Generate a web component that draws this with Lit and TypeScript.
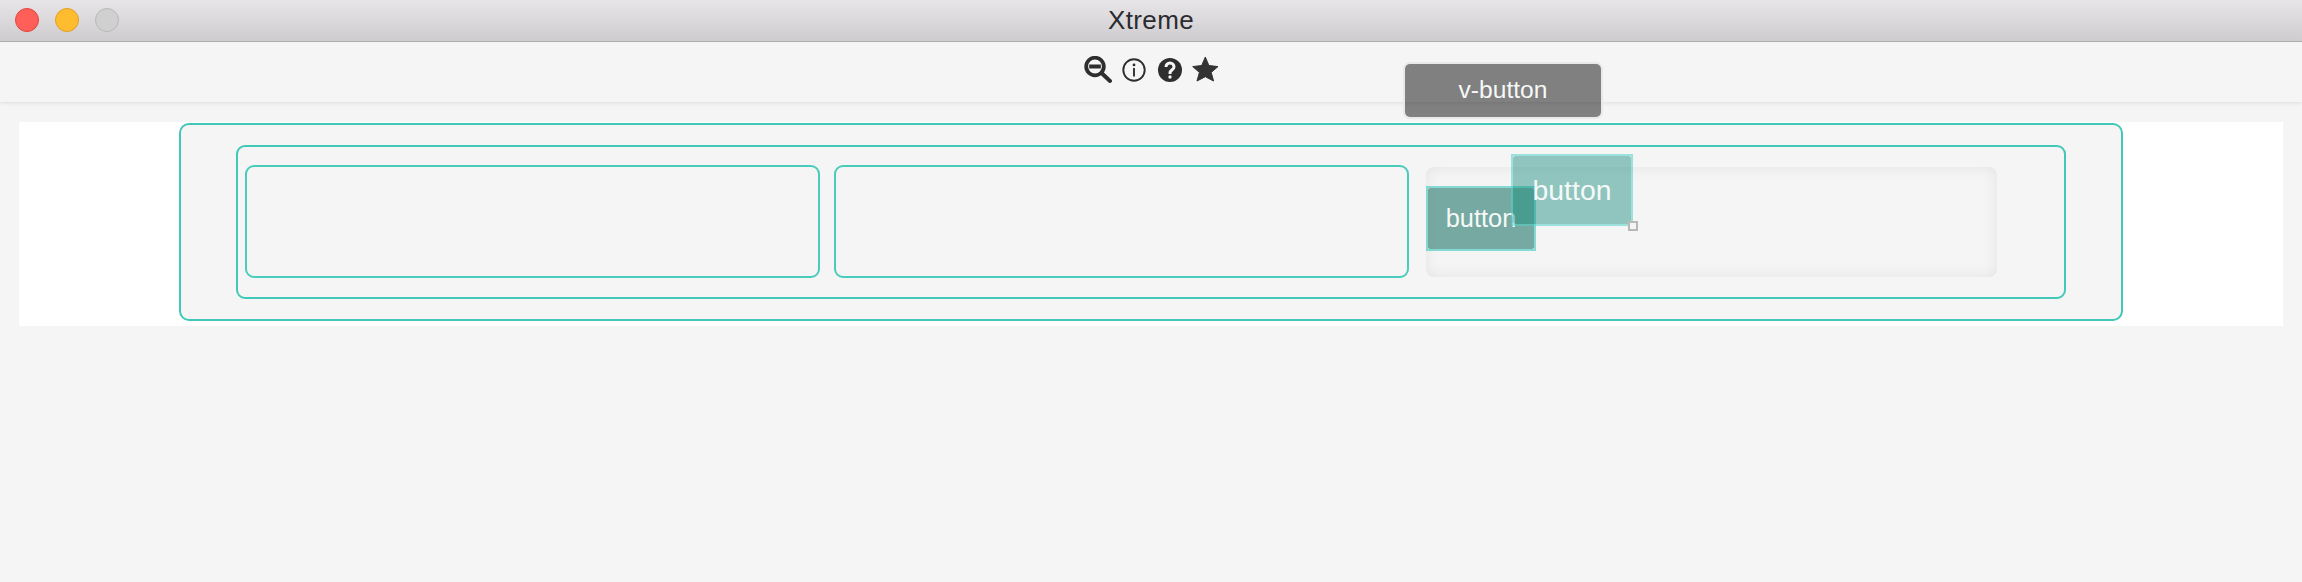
import { LitElement, html, css } from "lit";
import { customElement } from "lit/decorators.js";

@customElement("app-root")
export class AppRoot extends LitElement {
  static styles = css`
    :host {
      display: block;
      height: 582px;
      background: #f5f5f5;
      font-family: "Liberation Sans", Arial, sans-serif;
      overflow: hidden;
    }
    .stage {
      position: relative;
      width: 2302px;
      height: 582px;
    }
    .titlebar {
      height: 41px;
      box-sizing: content-box;
      border-bottom: 1px solid #aeacb0;
      background: linear-gradient(#e7e5e8, #cecccf);
      display: flex;
      align-items: center;
      position: relative;
      justify-content: center;
    }
    .lights {
      position: absolute;
      left: 15px;
      top: 8px;
      display: flex;
      gap: 16px;
    }
    .light {
      width: 24px;
      height: 24px;
      border-radius: 50%;
      box-sizing: border-box;
      border: 1px solid;
    }
    .red { background: #fe5f58; border-color: #e5443e; }
    .yellow { background: #febc2e; border-color: #e1a024; }
    .gray { background: #d0d0d0; border-color: #b8b8b8; }
    .title {
      font-size: 26px;
      color: #2b2b2f;
      letter-spacing: 0.4px;
    }
    .toolbar {
      height: 60px;
      background: #f5f5f5;
      box-shadow: 0 1px 4px rgba(0, 0, 0, 0.1);
      display: flex;
      justify-content: center;
      align-items: flex-start;
      gap: 10px;
      padding-top: 14px;
      box-sizing: border-box;
    }
    .toolbar svg { display: block; color: #2e2e2e; }
    .info { margin-top: 2px; }
    .help { margin: 2px 2px 0; }
    .star { margin-left: -2px; }
    .panel {
      margin: 20px 19px 0;
      height: 204px;
      background: #fff;
      padding: 1px 0 0 160px;
      box-sizing: border-box;
    }
    .outer {
      width: 1944px;
      height: 198px;
      box-sizing: border-box;
      border: 2px solid #42c8b8;
      border-radius: 10px;
      background: #f5f5f5;
      padding: 20px 0 0 55px;
    }
    .middle {
      width: 1830px;
      height: 154px;
      box-sizing: border-box;
      border: 2px solid #42c8b8;
      border-radius: 9px;
      padding: 18px 0 0 7px;
      display: flex;
      gap: 14px;
    }
    .cell {
      width: 575px;
      height: 113px;
      box-sizing: border-box;
      border: 2px solid #4accbc;
      border-radius: 9px;
    }
    .canvas {
      width: 571px;
      height: 110px;
      margin: 2px 0 0 3px;
      border-radius: 8px;
      background: #f5f5f5;
      box-shadow: inset 0 0 16px rgba(0, 0, 0, 0.075);
    }
    .btn {
      position: absolute;
      box-sizing: border-box;
      display: flex;
      align-items: center;
      justify-content: center;
      color: #f6f9f8;
      isolation: isolate;
    }
    .btn::before {
      content: "";
      position: absolute;
      inset: 0;
      border-radius: 2px;
      z-index: -1;
    }
    .vbtn {
      left: 1403px;
      top: 62px;
      width: 200px;
      height: 57px;
      padding-bottom: 1px;
      border: 2px solid #e9e9e9;
      border-radius: 7px;
      font-size: 24.6px;
    }
    .vbtn::before {
      background: rgba(0, 0, 0, 0.48);
      border-radius: 5px;
    }
    .b1 {
      left: 1426px;
      top: 186px;
      width: 110px;
      height: 65px;
      border: 2px solid rgba(60, 200, 190, 0.6);
      font-size: 25.4px;
    }
    .b1::before { background: rgba(0, 100, 85, 0.52); }
    .b2 {
      left: 1511px;
      top: 154px;
      width: 122px;
      height: 72px;
      padding-top: 1px;
      border: 2px solid rgba(80, 210, 200, 0.55);
      font-size: 28.4px;
    }
    .b2::before { background: rgba(20, 140, 125, 0.45); }
    .handle {
      position: absolute;
      left: 1628px;
      top: 221px;
      width: 10px;
      height: 10px;
      box-sizing: border-box;
      border: 2px solid #b8b8b8;
      background: #f4f4f4;
    }
  `;

  render() {
    return html`
      <div class="stage">
        <div class="titlebar">
          <div class="lights">
            <div class="light red"></div>
            <div class="light yellow"></div>
            <div class="light gray"></div>
          </div>
          <div class="title">Xtreme</div>
        </div>
        <div class="toolbar">
          <svg width="28" height="28" viewBox="0 0 28 28" fill="none" stroke="currentColor">
            <circle cx="11" cy="10.5" r="8.8" stroke-width="3.8"></circle>
            <path d="M5.2 10.5h11.6" stroke-width="4"></path>
            <path d="M17.5 17l8.5 8" stroke-width="4" stroke-linecap="round"></path>
          </svg>
          <svg class="info" width="24" height="24" viewBox="0 0 24 24">
            <circle cx="12" cy="12" r="10.7" fill="none" stroke="currentColor" stroke-width="1.9"></circle>
            <circle cx="12" cy="6.9" r="1.4" fill="currentColor"></circle>
            <path d="M12 10v8.4" stroke="currentColor" stroke-width="1.9" fill="none"></path>
          </svg>
          <svg class="help" width="24" height="24" viewBox="0 0 24 24">
            <circle cx="12" cy="12" r="12" fill="currentColor"></circle>
            <path d="M8 9a4 4 0 0 1 8 0c0 2.6-4 3-4 6v1" fill="none" stroke="#f5f5f5" stroke-width="3"></path>
            <circle cx="12" cy="19" r="1.7" fill="#f5f5f5"></circle>
          </svg>
          <svg class="star" width="27" height="26" viewBox="0 0 27 26">
            <path fill="#333" stroke="#333" stroke-width="1" stroke-linejoin="round" d="M13.3 1L16.9 9.5L26 10.6L19.2 16.4L21.6 25L13.3 20.7L5 25L7.4 16.4L.7 10.6L9.7 9.5z"></path>
          </svg>
        </div>
        <div class="panel">
          <div class="outer">
            <div class="middle">
              <div class="cell"></div>
              <div class="cell"></div>
              <div class="canvas"></div>
            </div>
          </div>
        </div>
        <div class="btn vbtn">v-button</div>
        <div class="btn b1">button</div>
        <div class="btn b2">button</div>
        <div class="handle"></div>
      </div>
    `;
  }
}
